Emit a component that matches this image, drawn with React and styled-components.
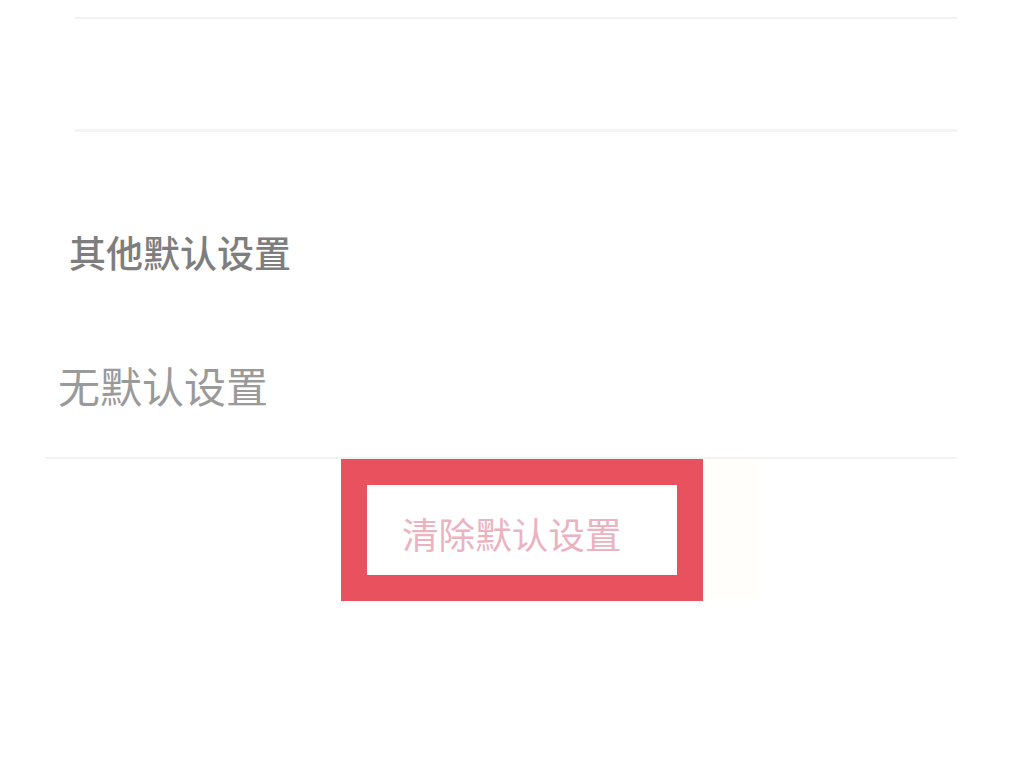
import React from 'react'
import styled, { createGlobalStyle } from 'styled-components'

const GlobalStyle = createGlobalStyle`
  html, body {
    margin: 0;
    padding: 0;
    background: #ffffff;
  }
  body {
    font-family: "Noto Sans CJK SC", "Noto Sans", sans-serif;
  }
`

const Page = styled.div`
  width: 1024px;
  height: 766px;
  overflow: hidden;
  display: flex;
  flex-direction: column;
`

const Divider = styled.div`
  margin-top: ${(p) => p.top}px;
  margin-left: ${(p) => p.left}px;
  width: ${(p) => 957 - p.left}px;
  height: ${(p) => p.thick}px;
  background: ${(p) => p.color};
`

const SectionTitle = styled.div`
  margin-top: 102px;
  padding-left: 69px;
  font-size: 37px;
  line-height: 37px;
  font-weight: 500;
  color: #7e7e7e;
`

const Value = styled.div`
  margin-top: 93px;
  padding-left: 58px;
  font-size: 42px;
  line-height: 42px;
  font-weight: 400;
  color: #9a9a9a;
`

const Row = styled.div`
  display: flex;
  align-items: stretch;
  margin-left: 341px;
`

const ClearButton = styled.div`
  box-sizing: border-box;
  width: 362px;
  height: 142px;
  border: 26px solid #e8515d;
  padding: 30px 0 0 35px;
  background: #ffffff;
  font-size: 36.6px;
  line-height: 37px;
  color: #ebb3bf;
`

const Haze = styled.div`
  width: 56px;
  height: 140px;
  background: #fffefb;
`

export default function App() {
  return (
    <Page>
      <GlobalStyle />
      <Divider top={17} left={75} thick={2} color="#f1f1f1" />
      <Divider top={110} left={75} thick={3} color="#f3f3f3" />
      <SectionTitle>其他默认设置</SectionTitle>
      <Value>无默认设置</Value>
      <Divider top={51} left={45} thick={2} color="#f2f2f2" />
      <Row>
        <ClearButton>清除默认设置</ClearButton>
        <Haze />
      </Row>
    </Page>
  )
}
